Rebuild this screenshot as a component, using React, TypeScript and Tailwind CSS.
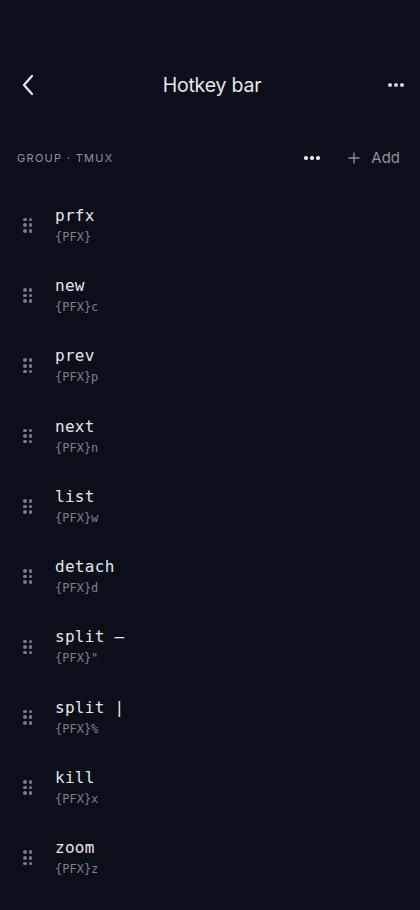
import React from "react";

const items: [string, string][] = [
  ["prfx", "{PFX}"],
  ["new", "{PFX}c"],
  ["prev", "{PFX}p"],
  ["next", "{PFX}n"],
  ["list", "{PFX}w"],
  ["detach", "{PFX}d"],
  ["split –", "{PFX}\""],
  ["split |", "{PFX}%"],
  ["kill", "{PFX}x"],
  ["zoom", "{PFX}z"],
];

function Handle() {
  return (
    <div className="grid grid-cols-2 gap-x-[2px] gap-y-[2px] w-[9px]">
      {Array.from({ length: 6 }).map((_, i) => (
        <div key={i} className="w-[3.6px] h-[3.6px] rounded-full bg-[#767d8a]" />
      ))}
    </div>
  );
}

export default function App() {
  return (
    <div
      className="w-[420px] h-[910px] bg-[#0b0f19] overflow-hidden"
      style={{ fontFamily: "Inter, 'Noto Sans', sans-serif" }}
    >
      <div className="h-[170px] flex flex-col">
        <div className="h-[63px]" />
        <div className="h-[46px] flex items-center justify-between px-[20px]">
          <svg width="14" height="22" viewBox="0 0 14 22" fill="none" className="ml-[1px]">
            <path d="M11 2 L3 11 L11 20" stroke="#e5e7eb" strokeWidth="2.2" strokeLinecap="round" strokeLinejoin="round" />
          </svg>
          <div className="text-[19.5px] text-[#e5e7eb] tracking-[-0.2px] ml-[2px]">Hotkey bar</div>
          <svg width="18" height="6" viewBox="0 0 18 6" className="mr-[-5px]">
            <circle cx="3" cy="3" r="2" fill="#d1d5db" />
            <circle cx="9" cy="3" r="2" fill="#d1d5db" />
            <circle cx="15" cy="3" r="2" fill="#d1d5db" />
          </svg>
        </div>
        <div className="h-[38px]" />
        <div className="h-[24px] flex items-center px-[17px]">
          <div className="text-[11px] tracking-[1.3px] text-[#8b93a1] flex-1">
            GROUP · TMUX
          </div>
          <svg width="18" height="6" viewBox="0 0 18 6" className="mr-[27px]">
            <circle cx="3" cy="3" r="2.1" fill="#f3f4f6" />
            <circle cx="9" cy="3" r="2.1" fill="#f3f4f6" />
            <circle cx="15" cy="3" r="2.1" fill="#f3f4f6" />
          </svg>
          <svg width="12" height="12" viewBox="0 0 12 12" className="mr-[11px]">
            <path d="M6 0.5 V11.5 M0.5 6 H11.5" stroke="#8b93a1" strokeWidth="1.3" />
          </svg>
          <div className="text-[15px] text-[#8b93a1] mr-[3px]">Add</div>
        </div>
      </div>
      <div className="flex flex-col mt-[20px]">
        {items.map(([label, sub]) => (
          <div key={label} className="h-[70.3px] flex items-center pl-[23px]">
            <Handle />
            <div
              className="ml-[23px] flex flex-col"
              style={{ fontFamily: "'DejaVu Sans Mono', monospace" }}
            >
              <div className="text-[16px] leading-[20px] text-[#e5e7eb] tracking-[0.3px]">{label}</div>
              <div className="text-[12px] leading-[16px] mt-[3px] text-[#7a818e]">{sub}</div>
            </div>
          </div>
        ))}
      </div>
    </div>
  );
}
